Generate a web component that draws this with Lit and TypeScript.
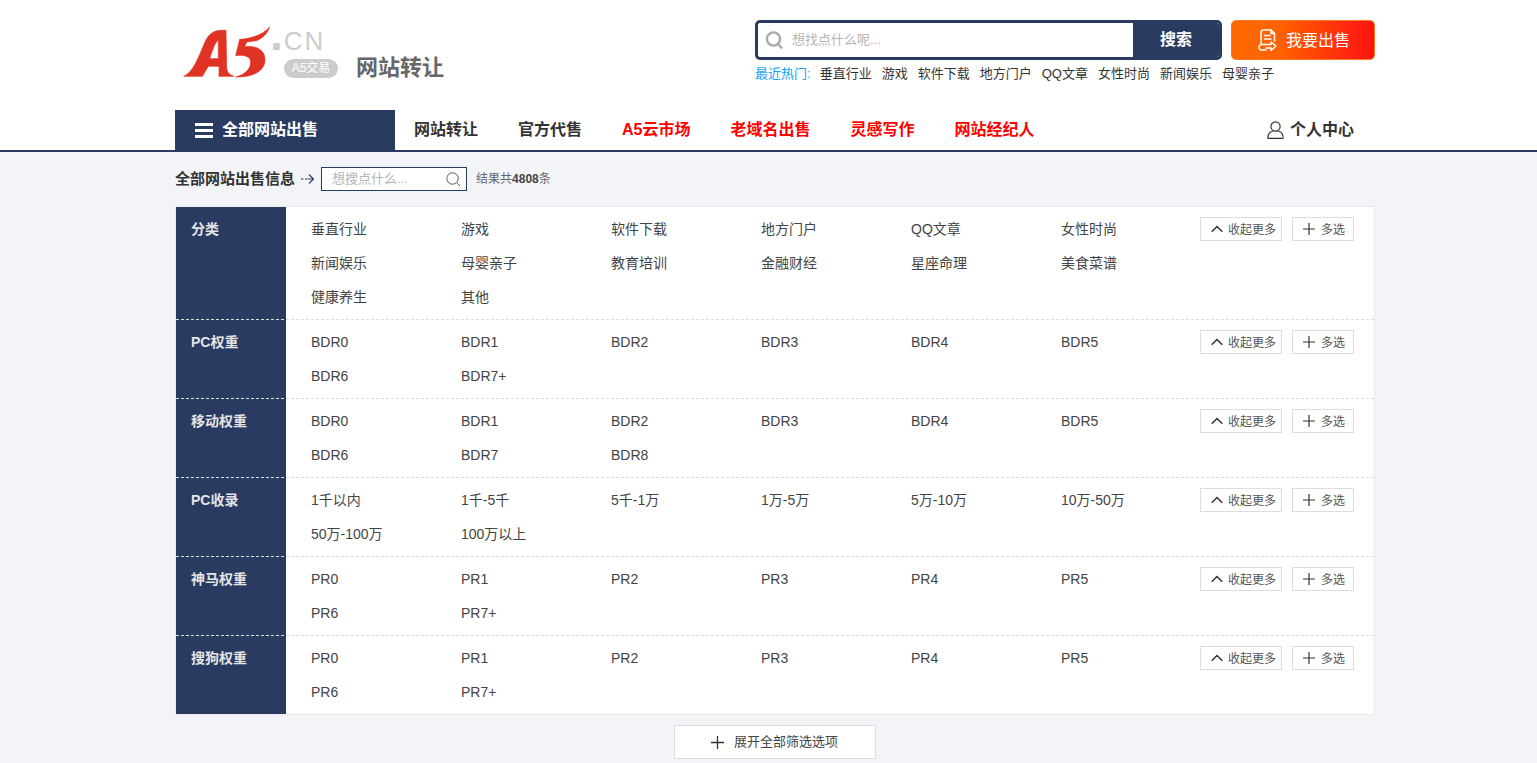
import { LitElement, html, css } from "lit";
import { customElement } from "lit/decorators.js";

const cat = ["垂直行业","游戏","软件下载","地方门户","QQ文章","女性时尚","新闻娱乐","母婴亲子","教育培训","金融财经","星座命理","美食菜谱","健康养生","其他"];
const rows: { label: string; items: string[] }[] = [
  { label: "分类", items: cat },
  { label: "PC权重", items: ["BDR0","BDR1","BDR2","BDR3","BDR4","BDR5","BDR6","BDR7+"] },
  { label: "移动权重", items: ["BDR0","BDR1","BDR2","BDR3","BDR4","BDR5","BDR6","BDR7","BDR8"] },
  { label: "PC收录", items: ["1千以内","1千-5千","5千-1万","1万-5万","5万-10万","10万-50万","50万-100万","100万以上"] },
  { label: "神马权重", items: ["PR0","PR1","PR2","PR3","PR4","PR5","PR6","PR7+"] },
  { label: "搜狗权重", items: ["PR0","PR1","PR2","PR3","PR4","PR5","PR6","PR7+"] },
];
const hot = ["垂直行业","游戏","软件下载","地方门户","QQ文章","女性时尚","新闻娱乐","母婴亲子"];
const nav = [
  { t: "网站转让", red: false }, { t: "官方代售", red: false }, { t: "A5云市场", red: true },
  { t: "老域名出售", red: true }, { t: "灵感写作", red: true }, { t: "网站经纪人", red: true },
];
const hasCjk = (s: string) => /[\u4e00-\u9fff]/.test(s);

const plus = (s: number) => html`<svg width=${s} height=${s} viewBox="0 0 12 12" fill="none" stroke="#333" stroke-width="1.2"><path d="M6 0v12M0 6h12"/></svg>`;

@customElement("app-root")
export class AppRoot extends LitElement {
  static styles = css`
    :host { display: block; height: 763px; overflow: hidden; background: #f3f4f8; color: #333;
      font-family: "Liberation Sans", "Noto Sans CJK SC", sans-serif; }
    * { box-sizing: border-box; }
    .top { background: #fff; }
    .wrap { width: 1200px; margin: 0 0 0 175px; }
    .up { padding-bottom: 2px; }
    .up2 { padding-bottom: 4px; }
    .header { height: 110px; display: flex; justify-content: space-between; }
    .logo { display: flex; padding: 22px 0 0 4px; }
    .mark { display: block; width: 100px; height: 60px; }
    .domain { margin-left: -8px; width: 82px; }
    .cn { height: 33px; margin-top: -1px; display: flex; align-items: baseline; color: #ccc; font-size: 26px; line-height: 26px; letter-spacing: 2px; }
    .cn .dot { font-size: 46px; line-height: 26px; font-weight: 700; letter-spacing: 0; margin: 0 1px 0 -1px; }
    .badge { margin: 5px 0 0 13px; width: 54px; height: 19px; border-radius: 10px; background: #ccc; color: #fff; font-size: 12px; line-height: 19px; text-align: center; white-space: nowrap; }
    .title { margin: 30px 0 0 3px; font-size: 22px; line-height: 32px; font-weight: 700; color: #666; white-space: nowrap; }
    .right { width: 620px; padding-top: 20px; }
    .searchline { display: flex; gap: 9px; }
    .search { width: 467px; height: 40px; border: 3px solid #2a3b62; border-radius: 5px; display: flex; align-items: center; background: #fff; overflow: hidden; }
    .search svg { margin-left: 7px; }
    .ph { flex: 1; margin-left: 9px; font-size: 13px; color: #b5b5b5; padding-bottom: 4px; }
    .sbtn { width: 86px; height: 40px; background: #2a3b62; color: #fff; font-weight: 700; font-size: 16px; display: flex; align-items: center; justify-content: center; padding: 0 0 4px 0; }
    .sell { width: 144px; height: 40px; border-radius: 5px; border: 1px solid #ff7a1a; background: linear-gradient(to right, #ff6a00, #ff6000 35%, #ff1212); color: #fff; font-size: 16px; display: flex; align-items: center; padding-left: 26px; gap: 9px; }
    .hot { display: flex; gap: 10px; margin-top: 5px; font-size: 13px; line-height: 18px; color: #333; white-space: nowrap; }
    .hot .lead { color: #12a5f4; margin-right: -1px; }
    .nav { height: 40px; display: flex; align-items: center; font-size: 16px; font-weight: 700; }
    .all { width: 220px; height: 40px; background: #2a3b62; color: #fff; display: flex; align-items: center; padding-left: 20px; gap: 9px; }
    .links { display: flex; gap: 40px; margin-left: 19px; flex: 1; }
    .red { color: #f00; }
    .me { display: flex; align-items: center; gap: 6px; margin-right: 21px; }
    .rule { height: 2px; background: #2a3b62; }
    .tools { height: 54px; display: flex; align-items: center; }
    .tools b { font-size: 15px; color: #333; padding-bottom: 4px; }
    .arrow { margin: 0 7px 0 6px; display: block; }
    .find { width: 146px; height: 24px; border: 1px solid #2a3b62; background: #fff; display: flex; align-items: center; padding: 0 5px 0 10px; font-size: 13px; color: #b5b5b5; justify-content: space-between; }
    .count { margin-left: 9px; font-size: 12px; color: #666; }
    .count b { font-size: 12px; color: #444; padding: 0; }
    .table { border: 1px solid #eaeaea; background: #fff; }
    .row { display: flex; padding: 5px 0; border-bottom: 1px dashed #ddd; background: linear-gradient(to right, #2a3b62 110px, #fff 110px); }
    .row:last-child { border-bottom: 0; }
    .label { width: 110px; flex: none; padding-left: 15px; font-size: 14px; line-height: 34px; font-weight: 700; color: #e4e4e4; }
    .items { flex: 1; min-width: 0; margin-left: 25px; display: grid; grid-template-columns: repeat(6, 150px); grid-auto-rows: 34px; align-items: center; font-size: 14px; color: #444; }
    .acts { flex: none; display: flex; gap: 10px; margin: 5px 20px 0 0; align-self: flex-start; }
    .btn { height: 24px; border: 1px solid #ddd; background: #fff; display: flex; align-items: center; font-size: 12px; color: #555; white-space: nowrap; }
    .b1 { width: 82px; padding-left: 10px; gap: 5px; }
    .b2 { width: 62px; padding-left: 10px; gap: 6px; }
    .more { width: 202px; height: 34px; margin: 10px auto 0; border: 1px solid #ddd; background: #fff; display: flex; align-items: center; padding-left: 36px; gap: 10px; font-size: 13px; color: #444; }
  `;

  render() {
    return html`
      <div class="top">
        <div class="wrap">
          <div class="header">
            <div class="logo">
              <svg class="mark" viewBox="0 0 300 180" role="img" aria-label="A5">
                <g fill="#e13323" stroke="#e13323" stroke-width="2">
                  <path fill-rule="evenodd" d="M14 163C45 150 60 100 78 60C88 38 102 26 125 25L141 25L143 135C143 150 150 158 165 163L120 163L120 133L88 133L70 163ZM118 55C108 62 103 78 92 110L118 110Z"/>
                  <path d="M182 52C215 50 250 40 272 15C265 35 250 50 232 56L203 60L197 74C238 70 258 88 258 113C258 145 225 166 170 165C197 158 215 142 215 121C215 105 198 97 170 101Z"/>
                </g>
              </svg>
              <div class="domain">
                <div class="cn"><span class="dot">.</span>CN</div>
                <div class="badge">A5交易</div>
              </div>
              <div class="title">网站转让</div>
            </div>
            <div class="right">
              <div class="searchline">
                <div class="search">
                  <svg width="18" height="18" viewBox="0 0 18 18" fill="none" stroke="#aaa" stroke-width="2.4"><circle cx="8.5" cy="8" r="6.6"/><path d="M13 13l4 4.4"/></svg>
                  <span class="ph">想找点什么呢...</span>
                  <span class="sbtn">搜索</span>
                </div>
                <div class="sell">
                  <svg width="19" height="23" viewBox="0 0 19 23" fill="none" stroke="#fff" stroke-width="1.5" stroke-linejoin="round" stroke-linecap="round"><path d="M3 15.5V3.5Q3 1 5.5 1H13L16.5 4.5V12"/><path d="M13 1V4.5H16.5"/><path d="M6.5 6.5H12M6.5 10H13"/><path d="M3 15.5Q1 16 1 18Q1 21 4 21H8"/><path d="M3 15.5H13V13L18 17L13 21.5V19H8"/></svg>
                  <span class="up">我要出售</span>
                </div>
              </div>
              <div class="hot">
                <span class="lead">最近热门:</span>
                ${hot.map((h) => html`<span>${h}</span>`)}
              </div>
            </div>
          </div>
          <div class="nav">
            <div class="all">
              <svg width="18" height="15" viewBox="0 0 18 15" fill="#fff"><rect width="18" height="3"/><rect y="6" width="18" height="3"/><rect y="12" width="18" height="3"/></svg>
              <span class="up2">全部网站出售</span>
            </div>
            <div class="links">
              ${nav.map((n) => html`<span class="up2 ${n.red ? "red" : ""}">${n.t}</span>`)}
            </div>
            <div class="me">
              <svg width="17" height="18" viewBox="0 0 17 18" fill="none" stroke="#333" stroke-width="1.2"><circle cx="8.5" cy="5.5" r="4.6"/><path d="M0.8 17.4C0.8 13 3.5 10.500 6 10M16.200 17.400C16.200 13 13.500 10.500 11 10M0.800 17.400H16.200"/></svg>
              <span class="up2">个人中心</span>
            </div>
          </div>
        </div>
        <div class="rule"></div>
      </div>
      <div class="wrap">
        <div class="tools">
          <b>全部网站出售信息</b>
          <svg class="arrow" width="13" height="10" viewBox="0 0 13 10" fill="none" stroke-width="1.1"><path stroke="#333" d="M0 5h2.5M4 5h2.5"/><path stroke="#2a3b62" d="M8 .5L12.5 5L8 9.500M7 5h5"/></svg>
          <div class="find">
            <span class="up2">想搜点什么...</span>
            <svg width="15" height="15" viewBox="0 0 15 15" fill="none" stroke="#555" stroke-width="1"><circle cx="6.500" cy="6.500" r="5.700"/><path d="M10.600 10.600l3.400 3.400"/></svg>
          </div>
          <span class="count up2">结果共<b>4808</b>条</span>
        </div>
        <div class="table">
          ${rows.map((r) => html`
            <div class="row">
              <div class="label">${r.label}</div>
              <div class="items">${r.items.map((i) => html`<span class=${hasCjk(i) ? "up" : ""}>${i}</span>`)}</div>
              <div class="acts">
                <span class="btn b1">
                  <svg width="12" height="8" viewBox="0 0 12 8" fill="none" stroke="#333" stroke-width="1.500"><path d="M.7 6.800L6 1.500L11.300 6.800"/></svg>
                  <span class="up">收起更多</span>
                </span>
                <span class="btn b2">${plus(12)}<span class="up">多选</span></span>
              </div>
            </div>`)}
        </div>
        <div class="more">${plus(13)}<span class="up2">展开全部筛选选项</span></div>
      </div>
    `;
  }
}
